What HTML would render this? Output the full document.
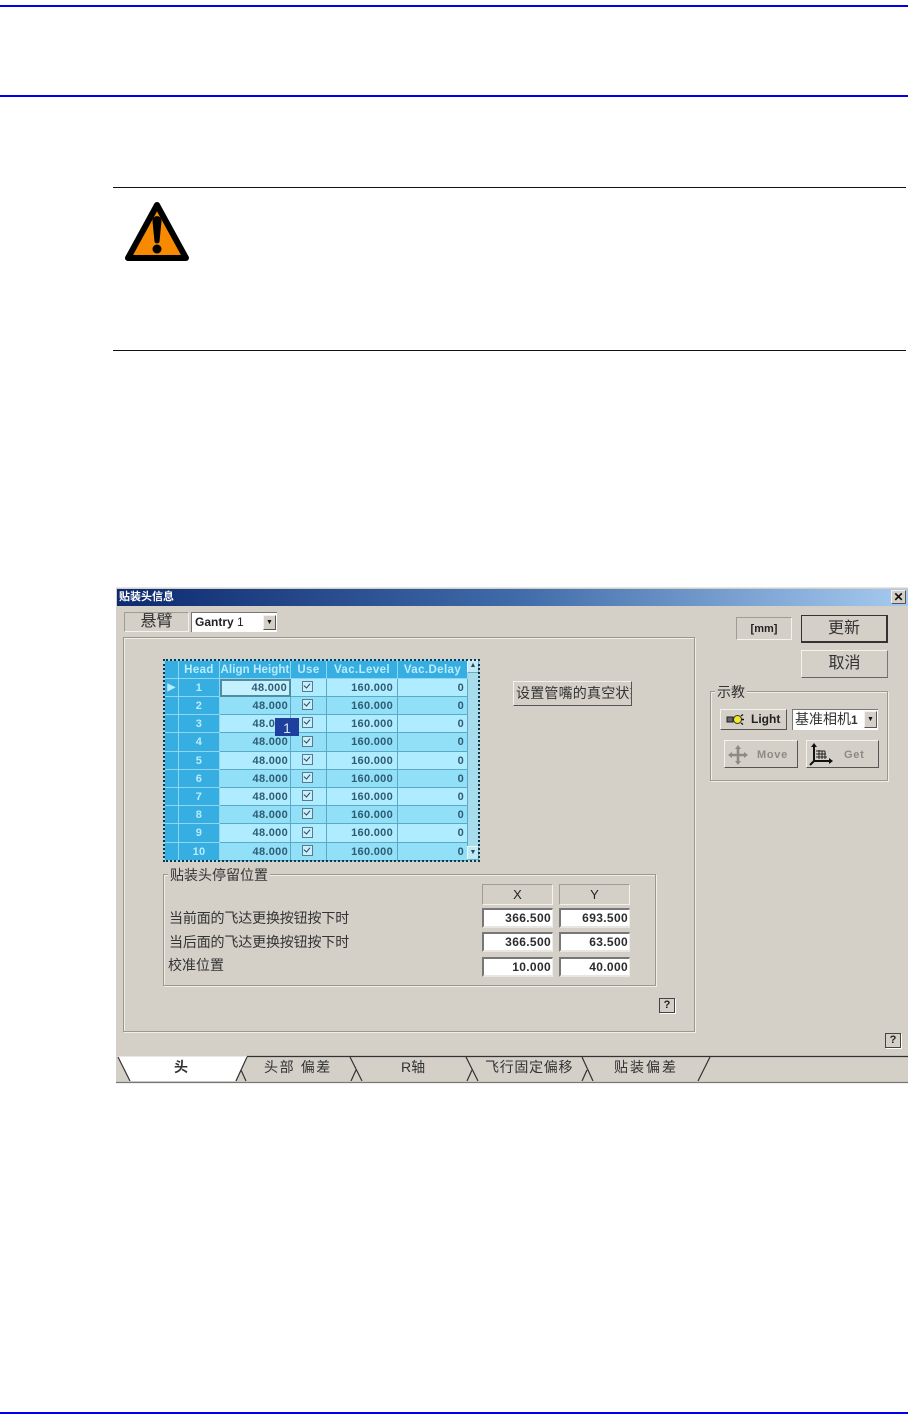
<!DOCTYPE html>
<html>
<head>
<meta charset="utf-8">
<style>
html,body{margin:0;padding:0;background:#fff}
#p{position:relative;width:908px;height:1424px;overflow:hidden;background:#fff;font-family:"Liberation Sans","Noto Sans CJK SC",sans-serif;color:#222}
#d{position:absolute;left:0;top:0;width:908px;height:1424px;filter:blur(.35px)}
.a,.t{position:absolute}
.t{white-space:nowrap;font-size:14px;line-height:16px}
.line{position:absolute;background:#0000f0}
.raised{position:absolute;box-sizing:border-box;background:#d4d0c8;border:1px solid;border-color:#f4f2ee #555 #555 #f4f2ee;text-align:center}
.sunk{position:absolute;box-sizing:border-box;background:#d4d0c8;border:1px solid;border-color:#a09c94 #f4f2ee #f4f2ee #a09c94;text-align:center}
.field{position:absolute;box-sizing:border-box;background:#fff;border-top:2px solid #777;border-left:2px solid #777;border-right:1px solid #eee;border-bottom:2px solid #e8e6e0;text-align:right;padding-right:1px;font:bold 12px/17px "Liberation Sans",sans-serif;color:#2c2c2c;letter-spacing:.35px}
.group{position:absolute;box-sizing:border-box;border:1px solid #9c988f;box-shadow:1px 1px 0 #f0eee8,inset 1px 1px 0 #f0eee8}
table{position:absolute;left:164px;top:660px;width:303px;border-collapse:collapse;table-layout:fixed;font:bold 11px "Liberation Sans",sans-serif;color:#2f5c72}
td{padding:0 2px 0 0;border:1px solid #5aa9c6;height:17px;text-align:right;overflow:hidden;white-space:nowrap;background:#b0ecff;letter-spacing:.3px}
td.v{padding-right:4px}
td.z{padding-right:3px}
tr.x td{height:18px}
tr.e td{background:#92dff8}
tr td:nth-child(1),tr td:nth-child(2),tr.h td{background:#37aee2;color:#b8ecfb;text-align:center;padding:0;border-color:#8fd7f0}
tr.h td{font-size:11.5px;letter-spacing:.4px}
tr.h td.n{letter-spacing:.1px}
td.c{text-align:center;padding:0 2px 0 0}
td.c i{display:inline-block;width:9px;height:9px;border:1px solid #5a7a8a;background:#c6f0ff;position:relative;vertical-align:middle;top:-1px}
td.c i:after{content:"";position:absolute;left:2px;top:0;width:3px;height:5px;border:solid #345;border-width:0 1.5px 1.5px 0;transform:rotate(40deg)}
.help{position:absolute;box-sizing:border-box;width:16px;height:15px;background:#d4d0c8;border:1px solid #444;box-shadow:1px 1px 0 #fff;text-align:center;font:bold 11px/13px "Liberation Sans",sans-serif;color:#222}
.tab{position:absolute;top:1059px;font-size:14px;line-height:16px;color:#333;white-space:nowrap;letter-spacing:1.6px}
.sb{position:absolute;left:467px;width:12px;box-sizing:border-box;background:#bfe9f5;border:1px solid;border-color:#e6f8fc #6fa9ba #6fa9ba #e6f8fc}
</style>
</head>
<body>
<div id="p">
<div class="line" style="left:0;top:5px;width:908px;height:2px"></div>
<div class="line" style="left:0;top:95px;width:908px;height:2px"></div>
<div class="line" style="left:0;top:1412px;width:908px;height:2px"></div>
<div class="a" style="left:113px;top:187px;width:793px;height:1px;background:#111"></div>
<div class="a" style="left:113px;top:350px;width:793px;height:1px;background:#111"></div>
<svg class="a" style="left:120px;top:198px" width="74" height="68" viewBox="120 198 74 68">
<path d="M157 205L128 258H186Z" fill="#f78a00" stroke="#000" stroke-width="6" stroke-linejoin="round"/>
<path d="M152.500 221C152.500 214.500 161.500 214.500 161.500 221L159.500 241.500C159.300 244 154.700 244 154.500 241.500Z" fill="#000"/>
<circle cx="157" cy="249" r="4.500" fill="#000"/>
</svg>

<div id="d">
<!-- dialog -->
<div class="a" style="left:116px;top:587px;width:792px;height:496px;background:#d4d0c8;border-top:1px solid #e8e6e0;box-sizing:border-box"></div>
<div class="a" style="left:117px;top:589px;width:791px;height:17px;background:linear-gradient(90deg,#0e2a70 0%,#3f6aa8 50%,#a6caf0 100%)"></div>
<div class="t" style="left:119px;top:590px;color:#fff;font-size:11px;font-weight:bold;line-height:15px">贴装头信息</div>
<div class="raised" style="left:891px;top:590px;width:15px;height:14px;font:bold 12px/12px 'Liberation Sans',sans-serif;color:#111">✕</div>

<div class="sunk" style="left:124px;top:612px;width:65px;height:20px;line-height:18px;color:#333">悬臂</div>
<div class="a" style="left:191px;top:612px;width:86px;height:20px;box-sizing:border-box;background:#fff;border-left:1px solid #777;border-top:1px solid #777;font-size:12px;line-height:19px;padding-left:3px;color:#222"><b style="font-weight:bold">Gantry</b> 1</div>
<div class="raised" style="left:263px;top:615px;width:13px;height:15px;font-size:7px;line-height:13px;color:#111">▼</div>

<div class="group" style="left:123px;top:637px;width:572px;height:395px"></div>

<!-- grid -->
<div class="a" style="left:163px;top:659px;width:317px;height:203px;box-sizing:border-box;background:#a6dcec"></div>
<table>
<colgroup><col style="width:14px"><col style="width:41px"><col style="width:71px"><col style="width:36px"><col style="width:71px"><col style="width:70px"></colgroup>
<tr class="h"><td></td><td>Head</td><td class="n">Align Height</td><td>Use</td><td>Vac.Level</td><td>Vac.Delay</td></tr>
<tr><td style="font-size:10px">&#9654;</td><td>1</td><td style="background:#c4f0ff;outline:2px solid #4f8ea2;outline-offset:-2px;padding-right:3px">48.000</td><td class="c"><i></i></td><td class="v">160.000</td><td class="z">0</td></tr>
<tr class="e"><td></td><td>2</td><td>48.000</td><td class="c"><i></i></td><td class="v">160.000</td><td class="z">0</td></tr>
<tr><td></td><td>3</td><td>48.000</td><td class="c"><i></i></td><td class="v">160.000</td><td class="z">0</td></tr>
<tr class="e x"><td></td><td>4</td><td>48.000</td><td class="c"><i></i></td><td class="v">160.000</td><td class="z">0</td></tr>
<tr><td></td><td>5</td><td>48.000</td><td class="c"><i></i></td><td class="v">160.000</td><td class="z">0</td></tr>
<tr class="e"><td></td><td>6</td><td>48.000</td><td class="c"><i></i></td><td class="v">160.000</td><td class="z">0</td></tr>
<tr><td></td><td>7</td><td>48.000</td><td class="c"><i></i></td><td class="v">160.000</td><td class="z">0</td></tr>
<tr class="e"><td></td><td>8</td><td>48.000</td><td class="c"><i></i></td><td class="v">160.000</td><td class="z">0</td></tr>
<tr class="x"><td></td><td>9</td><td>48.000</td><td class="c"><i></i></td><td class="v">160.000</td><td class="z">0</td></tr>
<tr class="e"><td></td><td>10</td><td>48.000</td><td class="c"><i></i></td><td class="v">160.000</td><td class="z">0</td></tr>
</table>
<div class="sb" style="top:660px;height:13px;font-size:7px;line-height:10px;text-align:center;color:#345">▲</div>
<div class="sb" style="top:846px;height:14px;font-size:7px;line-height:11px;text-align:center;color:#345">▼</div>
<div class="a" style="left:163px;top:659px;width:317px;height:203px;box-sizing:border-box;border:2px dotted #1a3340"></div>
<div class="a" style="left:275px;top:718px;width:24px;height:18px;background:#1f3f9c;color:#dfe6f5;font-size:14px;line-height:20px;text-align:center">1</div>

<div class="raised" style="left:513px;top:681px;width:119px;height:25px;line-height:22px;overflow:hidden;white-space:nowrap;color:#333;font-size:14px;letter-spacing:.2px;text-align:left;padding-left:2px">设置管嘴的真空状态</div>

<!-- group -->
<div class="group" style="left:163px;top:874px;width:493px;height:112px"></div>
<div class="t" style="left:168px;top:867px;background:#d4d0c8;padding:0 2px;color:#333">贴装头停留位置</div>
<div class="sunk" style="left:482px;top:884px;width:71px;height:21px;font-size:13px;line-height:20px;color:#222">X</div>
<div class="sunk" style="left:559px;top:884px;width:71px;height:21px;font-size:13px;line-height:20px;color:#222">Y</div>
<div class="t" style="left:169px;top:910px;color:#333;letter-spacing:-.15px">当前面的飞达更换按钮按下时</div>
<div class="t" style="left:169px;top:934px;color:#333;letter-spacing:-.15px">当后面的飞达更换按钮按下时</div>
<div class="t" style="left:168px;top:957px;color:#333">校准位置</div>
<div class="field" style="left:482px;top:908px;width:71px;height:20px">366.500</div>
<div class="field" style="left:559px;top:908px;width:71px;height:20px">693.500</div>
<div class="field" style="left:482px;top:932px;width:71px;height:20px">366.500</div>
<div class="field" style="left:559px;top:932px;width:71px;height:20px">63.500</div>
<div class="field" style="left:482px;top:957px;width:71px;height:20px">10.000</div>
<div class="field" style="left:559px;top:957px;width:71px;height:20px">40.000</div>
<div class="help" style="left:659px;top:998px">?</div>
<div class="help" style="left:885px;top:1033px">?</div>

<!-- right -->
<div class="sunk" style="left:736px;top:617px;width:56px;height:23px;font:bold 11px/23px 'Liberation Sans',sans-serif;color:#222">[mm]</div>
<div class="raised" style="left:801px;top:615px;width:87px;height:28px;line-height:26px;border-color:#333;border-width:1px 2px 2px 1px;color:#333">更新</div>
<div class="raised" style="left:801px;top:650px;width:87px;height:28px;line-height:26px;color:#333;border-color:#f4f2ee #777 #666 #f4f2ee">取消</div>
<div class="group" style="left:710px;top:691px;width:178px;height:90px"></div>
<div class="t" style="left:715px;top:684px;background:#d4d0c8;padding:0 2px;color:#333">示教</div>
<div class="raised" style="left:720px;top:709px;width:67px;height:21px;font:bold 12px/19px 'Liberation Sans',sans-serif;text-align:left;padding-left:30px;color:#222">Light</div>
<svg class="a" style="left:726px;top:713px" width="20" height="13" viewBox="0 0 20 13">
<rect x="1" y="4" width="6" height="5" fill="#666" stroke="#222"/>
<circle cx="11.500" cy="6.500" r="4" fill="#f2ea20" stroke="#333"/>
<path d="M15 3l2-1.500M15.500 6.500h2.500M15 10l2 1.500" stroke="#111" stroke-width="1.400"/>
</svg>
<div class="a" style="left:792px;top:709px;width:86px;height:21px;box-sizing:border-box;background:#fff;border-left:1px solid #777;border-top:1px solid #777;font-size:14px;line-height:19px;padding-left:2px;color:#333;white-space:nowrap">基准相机<b style="font-size:12px">1</b></div>
<div class="raised" style="left:864px;top:711px;width:13px;height:17px;font-size:7px;line-height:15px;color:#111">▼</div>
<div class="raised" style="left:724px;top:740px;width:74px;height:28px;font:bold 11px/28px 'Liberation Sans',sans-serif;letter-spacing:.7px;color:#8d8a84;text-align:left;padding-left:32px">Move</div>
<svg class="a" style="left:728px;top:745px" width="20" height="20" viewBox="0 0 20 20">
<path d="M10 2v16M2 10h16" stroke="#8d8a84" stroke-width="2.500"/>
<path d="M10 0l3 4H7zM10 20l3-4H7zM0 10l4-3v6zM20 10l-4-3v6z" fill="#8d8a84"/>
</svg>
<div class="raised" style="left:806px;top:740px;width:73px;height:28px;font:bold 11px/28px 'Liberation Sans',sans-serif;letter-spacing:.7px;color:#8d8a84;text-align:left;padding-left:37px">Get</div>
<svg class="a" style="left:809px;top:743px" width="24" height="23" viewBox="0 0 24 23">
<path d="M5 2v16M5 18H21M5 18L1 22" stroke="#111" stroke-width="2" fill="none"/>
<path d="M5 0l3 4H2zM24 18l-4-3v6z" fill="#111"/>
<path d="M7 8h9M7 11h10M7 14h11M10 7v9M13 8v8M16 8v8" stroke="#222" stroke-width="1"/>
</svg>

<!-- tabs -->
<svg class="a" style="left:116px;top:1050px" width="792" height="36" viewBox="116 1050 792 36">
<path d="M117 1056.500H247L235 1081H130Z" fill="#fff"/>
<path d="M247 1056.500H908" stroke="#333" stroke-width="1.200" fill="none"/>
<path d="M118 1057L130 1081M247 1057L236 1081M241 1070L246 1081M350 1057L362 1081M356 1070L351 1081M466 1057L478 1081M472 1070L467 1081M582 1057L593 1081M587 1070L582 1081M710 1057L698 1081" stroke="#333" stroke-width="1.200" fill="none"/>
<path d="M116 1082.500H908" stroke="#777" stroke-width="1.200"/>
</svg>
<div class="tab" style="left:174px;font-weight:bold">头</div>
<div class="tab" style="left:264px">头部 偏差</div>
<div class="tab" style="left:401px;letter-spacing:0">R轴</div>
<div class="tab" style="left:485px;letter-spacing:.7px">飞行固定偏移</div>
<div class="tab" style="left:614px;letter-spacing:2px">贴装偏差</div>
</div>
</div>
</body>
</html>
